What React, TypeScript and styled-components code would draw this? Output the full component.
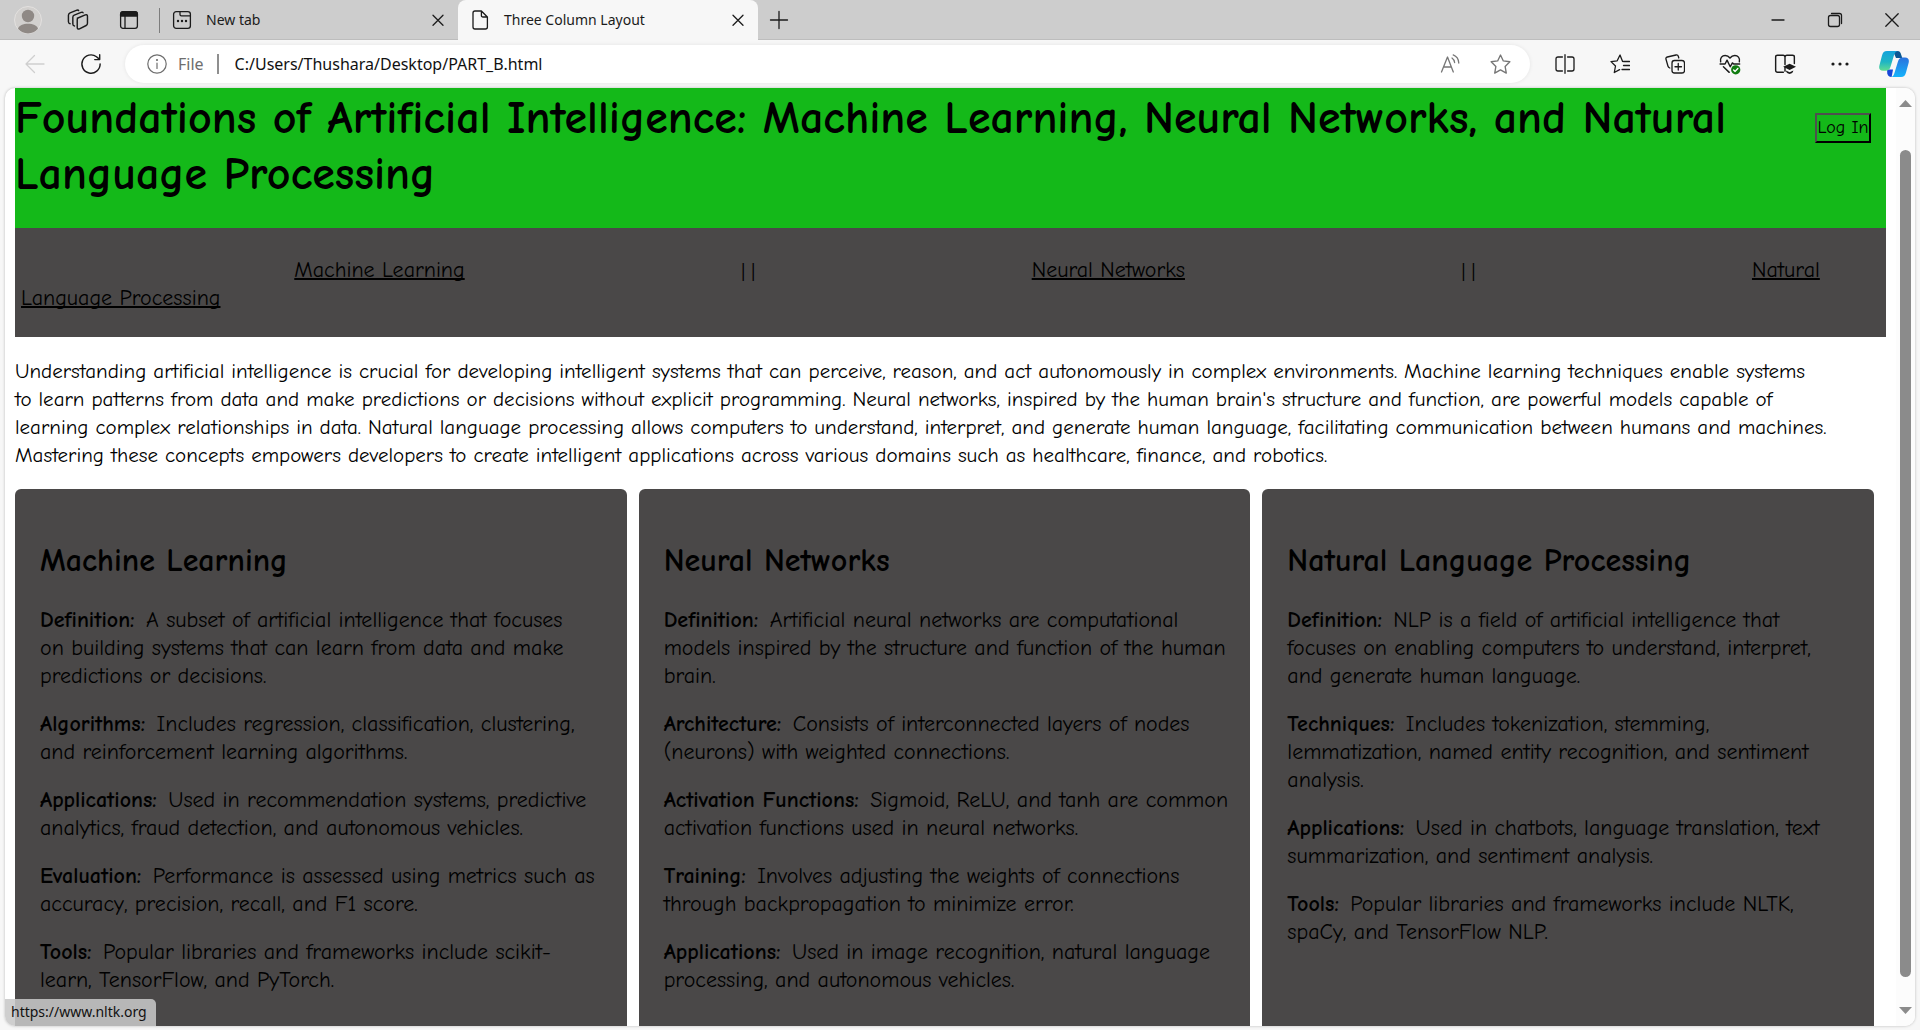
import React, { Fragment } from 'react';
import styled, { createGlobalStyle } from 'styled-components';

const uiFont = '"Noto Sans", "Open Sans", sans-serif';
const comicFont = '"Comic Neue", "Open Sans", sans-serif';
const slate = '#4a4848';

const GlobalStyle = createGlobalStyle`
  *, *::before, *::after { box-sizing: border-box; }
  body { margin: 0; background: #f7f7f7; }
  button { margin: 0; padding: 0; border: 0; background: none; color: inherit; font: inherit; }
`;

const Browser = styled.div`
  display: flex;
  flex-direction: column;
  height: 100vh;
  overflow: hidden;
  background: #f7f7f7;
  color: #1b1b1b;
  font-family: ${uiFont};
`;

const TabStrip = styled.header`
  display: flex;
  flex: none;
  height: 40px;
  padding-left: 3px;
  background: #cdcdcd;
  box-shadow: inset 0 -1px 0 #bdbdbd;
`;

const IconButton = styled.button<{ $width?: number; $color?: string }>`
  display: flex;
  flex: none;
  align-items: center;
  justify-content: center;
  width: ${(p) => p.$width ?? 56}px;
  color: ${(p) => p.$color ?? '#1b1b1b'};
`;

const StripDivider = styled.span`
  flex: none;
  width: 1px;
  height: 25px;
  margin: 8px 0 0 4px;
  background: #7d7d7d;
`;

const Tab = styled.div<{ $active?: boolean }>`
  display: flex;
  flex: 0 1 ${(p) => (p.$active ? 300 : 298)}px;
  align-items: center;
  gap: 14px;
  padding: 0 10px 0 12px;
  border-radius: 8px 8px 0 0;
  background: ${(p) => (p.$active ? '#f7f7f7' : 'transparent')};
  font-size: 14px;
  line-height: 20px;
  white-space: nowrap;
`;

const TabTitle = styled.span`
  flex: 1;
`;

const Spacer = styled.div`
  flex: 1;
`;

const Toolbar = styled.div`
  display: flex;
  flex: none;
  align-items: stretch;
  height: 48px;
  padding-left: 7px;
`;

const AddressBar = styled.div`
  display: flex;
  flex: 1;
  align-items: center;
  height: 38px;
  margin: 5px 7px 5px 6px;
  padding: 0 5px 0 22px;
  border-radius: 19px;
  background: #fff;
  box-shadow: 0 0 4px rgba(0, 0, 0, 0.08);
  font-size: 16px;
  line-height: 22px;
`;

const Scheme = styled.label`
  margin-left: 11px;
  padding-right: 13px;
  border-right: 2px solid #8f8f8f;
  color: #6e6e6e;
  line-height: 20px;
`;

const AddressInput = styled.input`
  flex: 1;
  min-width: 0;
  height: 22px;
  margin: 0 0 0 16px;
  padding: 0;
  border: 0;
  outline: 0;
  background: transparent;
  color: #111;
  font: 16px/22px ${uiFont};
`;

const Viewport = styled.div`
  position: relative;
  display: flex;
  flex: 1;
  min-height: 0;
  margin: 0 5px 4px;
  border-radius: 10px;
  overflow: hidden;
  background: #fff;
  box-shadow: 0 0 3px rgba(0, 0, 0, 0.25);
`;

const Page = styled.div`
  flex: 1;
  min-width: 0;
  padding: 0 10px;
  color: #000;
  font-family: ${comicFont};
  font-size: 22px;
  line-height: 28px;
  white-space: nowrap;
`;

const Banner = styled.header`
  display: flex;
  align-items: flex-start;
  justify-content: space-between;
  padding-bottom: 25px;
  background: #14b919;
`;

const Title = styled.h1`
  margin: 0;
  padding-top: 3px;
  font-size: 46px;
  line-height: 56px;
`;

const LoginButton = styled.button`
  width: 56px;
  height: 30px;
  margin: 25px 15px 0 0;
  border: 2px solid;
  border-color: #4f4f4f #000 #000 #4f4f4f;
  font-size: 18px;
  line-height: 24px;
`;

const Nav = styled.nav`
  padding: 28px 6px 25px;
  background: ${slate};
`;

const NavLink = styled.a<{ $first?: boolean }>`
  margin-left: ${(p) => (p.$first ? '14.7%' : '0')};
  color: #000;
  text-decoration: underline;
  text-decoration-thickness: 2px;
  text-underline-offset: 1px;
  text-decoration-skip-ink: none;
`;

const NavDivider = styled.span`
  display: inline-block;
  width: 30.5%;
  font-family: "Open Sans", sans-serif;
  font-size: 18px;
  text-align: center;
  vertical-align: top;
`;

const Intro = styled.p`
  margin: 20px 0;
  font-size: 21px;
`;

const Columns = styled.main`
  display: grid;
  grid-template-columns: repeat(3, minmax(0, 1fr));
  gap: 12px;
  margin-right: 12px;
`;

const Card = styled.section`
  padding: 25px;
  border-radius: 6px;
  background: ${slate};
`;

const CardTitle = styled.h2`
  margin: 26px 0 24px;
  font-size: 32px;
  line-height: 42px;
`;

const Topic = styled.p`
  margin: 0 0 20px;
`;

const Term = styled.strong`
  margin-right: 4px;
`;

const ScrollBar = styled.div`
  display: flex;
  flex: none;
  flex-direction: column;
  align-items: center;
  width: 19px;
  padding: 12px 0;
  background: #fcfcfc;
`;

const ScrollThumb = styled.div`
  flex: 1;
  width: 11px;
  margin: 43px 0 30px;
  border-radius: 6px;
  background: #8b8b8b;
`;

const StatusBubble = styled.div`
  position: absolute;
  left: 0;
  bottom: 0;
  padding: 3px 9px 4px 6px;
  border-radius: 0 5px 0 0;
  background: rgba(200, 200, 200, 0.87);
  color: #111;
  font-size: 14px;
  line-height: 20px;
`;

type IconProps = { size?: number; children: React.ReactNode; stroke?: number };
const Icon = ({ size = 20, stroke = 1.3, children }: IconProps) => (
  <svg width={size} height={size} viewBox="0 0 20 20" fill="none" stroke="currentColor"
    strokeWidth={stroke} strokeLinecap="round" strokeLinejoin="round" aria-hidden="true">
    {children}
  </svg>
);

const ProfileIcon = () => (
  <svg width="28" height="28" viewBox="0 0 28 28" aria-hidden="true">
    <circle cx="14" cy="14" r="13.5" fill="#d2d0ce" stroke="#e3e1df" />
    <circle cx="14" cy="10" r="6.2" fill="#8f8985" />
    <path d="M4 22.8C5 19.5 9 17.8 14 17.8s9 1.7 10 5A13.4 13.4 0 0 1 14 27.4 13.4 13.4 0 0 1 4 22.8Z" fill="#8f8985" />
  </svg>
);
const WorkspacesIcon = () => (
  <Icon size={22}>
    <path d="M9.4 8.4 16.6 5.4Q18.6 4.8 18.6 6.6V13Q18.6 14.4 17.4 15L11.4 18Q9.3 18.8 9.3 16.8V9.6Q9.2 8.6 10.2 8.1" />
    <path d="M14.6 3.4Q14.2 2.6 12.8 3.1L6.6 5.6Q5.3 6.2 5.3 7.4V13.6Q5.3 15.2 6.8 15.4" />
    <path d="M10.6 1.4Q10.2.7 9 1.1L2.8 3.6Q1.3 4.3 1.3 5.6V11.6Q1.3 13.2 2.8 13.4" />
  </Icon>
);
const TabActionsIcon = () => (
  <Icon>
    <rect x="1.6" y="1.9" width="16.8" height="16.4" rx="2.4" />
    <path d="M1.6 6V4Q1.6 1.6 4 1.6H16Q18.4 1.6 18.4 4V6Z" fill="currentColor" />
    <path d="M6 6V18" />
  </Icon>
);
const NewTabPageIcon = () => (
  <Icon>
    <rect x="1.6" y="1.6" width="16.8" height="16.8" rx="2.6" />
    <path d="M8 1.8V4.4Q8 5.8 9.4 5.8H18.2" />
    <g fill="currentColor" stroke="none">
      <circle cx="6" cy="11" r="1.2" /><circle cx="10" cy="11" r="1.2" /><circle cx="14" cy="11" r="1.2" />
    </g>
  </Icon>
);
const DocumentIcon = () => (
  <Icon>
    <path d="M11.4 1H5Q3 1 3 3V17Q3 19 5 19H15.4Q17.4 19 17.4 17V7ZM11.4 1V5.4Q11.4 7 13 7H17.4" />
  </Icon>
);
const CloseIcon = () => (
  <Icon><path d="m5 5.3 10 10M15 5.3l-10 10" /></Icon>
);
const StarPath = 'M10 1 12.7 6.6 18.9 7.4 14.4 11.8 15.5 18.2 10 15.2 4.5 18.2 5.6 11.8 1.1 7.4 7.3 6.6Z';

const CopilotIcon = () => (
  <svg width="30" height="28" viewBox="0 0 30 28" aria-hidden="true">
    <defs>
      <linearGradient id="copilotTeal" x1="0" y1="0" x2="0" y2="1">
        <stop offset="0" stopColor="#12a3dc" /><stop offset=".55" stopColor="#1fb5c4" /><stop offset="1" stopColor="#62dc93" />
      </linearGradient>
      <linearGradient id="copilotBlue" x1="0" y1="0" x2="0" y2="1">
        <stop offset="0" stopColor="#2a72dd" /><stop offset="1" stopColor="#15b3fb" />
      </linearGradient>
    </defs>
    <path d="M14 1h4.5c2.4 0 3 1.3 3.6 3.4L23.3 8H17Z" fill="#0a5793" />
    <path d="M8 19.5h6L12.6 27c-2.7 0-3.7-1.2-4.3-3.5Z" fill="#1646d8" />
    <path d="M8 1h11c-2.5 0-3.4 2.3-4.1 4.6l-3.3 11c-.9 2.9-2.3 4.2-5 4.2H4C.6 20.8-.4 18.6.4 15.5L3 5.5C3.8 2.4 5.2 1 8 1Z" fill="url(#copilotTeal)" />
    <path d="M22 27H11.5c2.5 0 3.4-2.3 4.1-4.6l3.3-10.6c.9-2.9 2.3-4.2 5-4.2H26c3.4 0 4.4 2.2 3.6 5.3L27 22.5C26.2 25.6 24.8 27 22 27Z" fill="url(#copilotBlue)" />
  </svg>
);

const toolbarIcons: { label: string; icon: React.ReactNode; width?: number }[] = [
  { label: 'Split screen', icon: <Icon><path d="M7.4 3H3Q1 3 1 5V15Q1 17 3 17H7.4M12.6 3H17Q19 3 19 5V15Q19 17 17 17H12.6M10 .7V19.3" /></Icon> },
  { label: 'Favorites', icon: <Icon><path d="M12.6 7.5 10 1 7.2 6.8 1 7.6 5.5 12 4.3 18.5 9.6 15.6M13.5 7.5H19.5M13.5 11.5H19.5M12 15.5H19.5" /></Icon> },
  { label: 'Collections', icon: <Icon><rect x="7" y="6.5" width="12.5" height="12.5" rx="2.5" /><path d="M13.25 9.5V16M10 12.75H16.5M13.8 4 13.3 2.3Q12.8.6 11 1L2.3 3Q.5 3.5 1 5.2L3 12.2Q3.4 13.5 4.8 14" /></Icon> },
  { label: 'Browser essentials', icon: (
    <Icon size={22}>
      <path d="M1.5 8C.7 4.5 3 2.2 5.6 2.2 7.8 2.2 9 3.3 10 4.6 11 3.3 12.2 2.2 14.4 2.2 17 2.2 19.3 4.5 18.5 8M1 10H5.5L7.3 6.5 10.2 12.5 12.2 9 13.3 10H18.8M4 12.5 9.3 17.6" />
      <circle cx="15.2" cy="15.3" r="4.2" fill="#107c10" stroke="none" />
      <path d="m13.3 15.4 1.4 1.3 2.4-2.7" stroke="#fff" />
    </Icon>
  ) },
  { label: 'Reading coach', icon: (
    <Icon size={22}>
      <path d="M8.5 17.5H3.2Q1.5 17.5 1.5 16V3.5Q1.5 2 3.2 2H8.2Q10 2 10 3.8V10.5M10 3.8Q10 2 11.8 2H16.8Q18.5 2 18.5 3.5V9.5M10 13V16.5" />
      <path d="M8.3 12.6 14.2 9.8 20 12.6 14.2 15.4ZM10.8 16 14.2 17.5 17.6 16Q17 19 14.2 19T10.8 16Z" fill="currentColor" stroke="none" />
    </Icon>
  ) },
  { label: 'Settings and more', icon: <Icon><g fill="currentColor" stroke="none"><circle cx="3" cy="10" r="1.6" /><circle cx="10" cy="10" r="1.6" /><circle cx="17" cy="10" r="1.6" /></g></Icon> },
  { label: 'Copilot', icon: <CopilotIcon />, width: 53 },
];

const introLines = [
  'Understanding artificial intelligence is crucial for developing intelligent systems that can perceive, reason, and act autonomously in complex environments. Machine learning techniques enable systems',
  "to learn patterns from data and make predictions or decisions without explicit programming. Neural networks, inspired by the human brain's structure and function, are powerful models capable of",
  'learning complex relationships in data. Natural language processing allows computers to understand, interpret, and generate human language, facilitating communication between humans and machines.',
  'Mastering these concepts empowers developers to create intelligent applications across various domains such as healthcare, finance, and robotics.',
];

type CardData = { title: string; topics: [string, string[]][] };
const cards: CardData[] = [
  {
    title: 'Machine Learning',
    topics: [
      ['Definition:', ['A subset of artificial intelligence that focuses', 'on building systems that can learn from data and make', 'predictions or decisions.']],
      ['Algorithms:', ['Includes regression, classification, clustering,', 'and reinforcement learning algorithms.']],
      ['Applications:', ['Used in recommendation systems, predictive', 'analytics, fraud detection, and autonomous vehicles.']],
      ['Evaluation:', ['Performance is assessed using metrics such as', 'accuracy, precision, recall, and F1 score.']],
      ['Tools:', ['Popular libraries and frameworks include scikit-', 'learn, TensorFlow, and PyTorch.']],
    ],
  },
  {
    title: 'Neural Networks',
    topics: [
      ['Definition:', ['Artificial neural networks are computational', 'models inspired by the structure and function of the human', 'brain.']],
      ['Architecture:', ['Consists of interconnected layers of nodes', '(neurons) with weighted connections.']],
      ['Activation Functions:', ['Sigmoid, ReLU, and tanh are common', 'activation functions used in neural networks.']],
      ['Training:', ['Involves adjusting the weights of connections', 'through backpropagation to minimize error.']],
      ['Applications:', ['Used in image recognition, natural language', 'processing, and autonomous vehicles.']],
    ],
  },
  {
    title: 'Natural Language Processing',
    topics: [
      ['Definition:', ['NLP is a field of artificial intelligence that', 'focuses on enabling computers to understand, interpret,', 'and generate human language.']],
      ['Techniques:', ['Includes tokenization, stemming,', 'lemmatization, named entity recognition, and sentiment', 'analysis.']],
      ['Applications:', ['Used in chatbots, language translation, text', 'summarization, and sentiment analysis.']],
      ['Tools:', ['Popular libraries and frameworks include NLTK,', 'spaCy, and TensorFlow NLP.']],
    ],
  },
];

const Lines = ({ lines }: { lines: string[] }) => (
  <>
    {lines.map((line, i) => (
      <Fragment key={line}>
        {i > 0 && <br />}
        {line}
      </Fragment>
    ))}
  </>
);

export default function App() {
  return (
    <Browser>
      <GlobalStyle />
      <TabStrip>
        <IconButton $width={50} aria-label="Profile"><ProfileIcon /></IconButton>
        <IconButton $width={50} aria-label="Workspaces"><WorkspacesIcon /></IconButton>
        <IconButton $width={52} aria-label="Tab actions"><TabActionsIcon /></IconButton>
        <StripDivider />
        <Tab>
          <NewTabPageIcon />
          <TabTitle>New tab</TabTitle>
          <IconButton $width={20} aria-label="Close New tab"><CloseIcon /></IconButton>
        </Tab>
        <Tab $active>
          <DocumentIcon />
          <TabTitle>Three Column Layout</TabTitle>
          <IconButton $width={20} aria-label="Close Three Column Layout"><CloseIcon /></IconButton>
        </Tab>
        <IconButton $width={42} aria-label="New tab"><Icon><path d="M10 1.5V18.5M1.5 10H18.5" /></Icon></IconButton>
        <Spacer />
        <IconButton $width={57} aria-label="Minimize"><Icon><path d="M4 10H16" /></Icon></IconButton>
        <IconButton $width={57} aria-label="Restore"><Icon><rect x="3.5" y="5.5" width="11" height="11" rx="2" /><path d="M6.5 3.5H14.5Q16.5 3.5 16.5 5.5V13.5" /></Icon></IconButton>
        <IconButton $width={57} aria-label="Close"><Icon><path d="M3.8 3.8 16.2 16.2M16.2 3.8 3.8 16.2" /></Icon></IconButton>
      </TabStrip>

      <Toolbar>
        <IconButton $color="#cfcfcf" aria-label="Back"><Icon><path d="M19 10H1M9.5 1.5 1 10 9.5 18.5" /></Icon></IconButton>
        <IconButton aria-label="Refresh"><Icon size={22}><path d="M18.3 10A8.3 8.3 0 1 1 15 3.4L17.8 5.8M17.9 1.5V6H13.4" /></Icon></IconButton>
        <AddressBar>
          <Icon stroke={1.2}>
            <g stroke="#6e6e6e"><circle cx="10" cy="10" r="9.2" /><path d="M10 9V14.5" /><circle cx="10" cy="6" r=".5" /></g>
          </Icon>
          <Scheme htmlFor="address">File</Scheme>
          <AddressInput id="address" defaultValue="C:/Users/Thushara/Desktop/PART_B.html" />
          <IconButton $width={50} $color="#767676" aria-label="Read aloud">
            <Icon><path d="M1.5 18 7.5 3 13.3 18M3.5 13H11.4M12 4Q14.2 5.5 14.6 8.5M13.2.9Q18.5 3 18.8 9" /></Icon>
          </IconButton>
          <IconButton $width={50} $color="#767676" aria-label="Add to favorites"><Icon size={21}><path d={StarPath} /></Icon></IconButton>
        </AddressBar>
        {toolbarIcons.map(({ label, icon, width }) => (
          <IconButton key={label} $width={width ?? 55} aria-label={label}>{icon}</IconButton>
        ))}
      </Toolbar>

      <Viewport>
        <Page>
          <Banner>
            <Title>
              Foundations of Artificial Intelligence: Machine Learning, Neural Networks, and Natural
              <br />
              Language Processing
            </Title>
            <LoginButton>Log In</LoginButton>
          </Banner>
          <Nav>
            <NavLink href="#machine-learning" $first>Machine Learning</NavLink>
            <NavDivider>||</NavDivider>
            <NavLink href="#neural-networks">Neural Networks</NavLink>
            <NavDivider>||</NavDivider>
            <NavLink href="https://www.nltk.org">
              Natural
              <br />
              Language Processing
            </NavLink>
          </Nav>
          <Intro><Lines lines={introLines} /></Intro>
          <Columns>
            {cards.map((card) => (
              <Card key={card.title}>
                <CardTitle>{card.title}</CardTitle>
                {card.topics.map(([term, lines]) => (
                  <Topic key={term}>
                    <Term>{term}</Term> <Lines lines={lines} />
                  </Topic>
                ))}
              </Card>
            ))}
          </Columns>
        </Page>
        <ScrollBar>
          <svg width="13" height="7" viewBox="0 0 13 7" aria-hidden="true"><path d="M0 7 6.5 0 13 7Z" fill="#8b8b8b" /></svg>
          <ScrollThumb />
          <svg width="13" height="7" viewBox="0 0 13 7" aria-hidden="true"><path d="M0 0 6.5 7 13 0Z" fill="#8b8b8b" /></svg>
        </ScrollBar>
        <StatusBubble>https://www.nltk.org</StatusBubble>
      </Viewport>
    </Browser>
  );
}
